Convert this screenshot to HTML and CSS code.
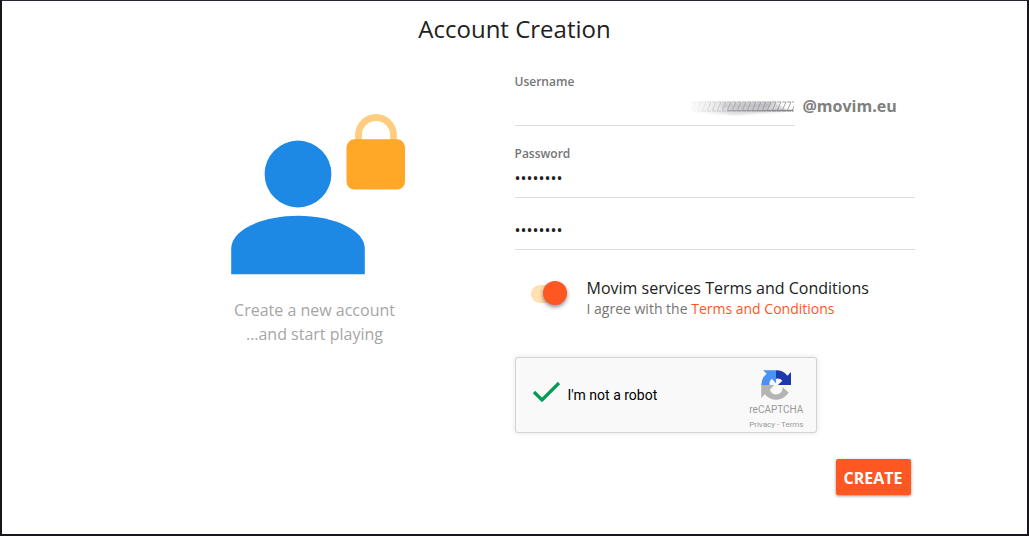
FILE: index.html
```html
<!DOCTYPE html>
<html lang="en">
<head>
<meta charset="utf-8">
<title>Account Creation</title>
<link rel="stylesheet" href="styles.css">
</head>
<body>
<main class="page">
  <h1 class="title">Account Creation</h1>
  <div class="columns">
    <section class="intro">
      <svg class="hero" viewBox="215 105 200 180" aria-hidden="true">
        <circle cx="298" cy="174" r="33.4" fill="#1e88e5"/>
        <path d="M231.200 274.200V248.500C231.200 230 262 215.700 298 215.700S364.800 230 364.800 248.500V274.200Z" fill="#1e88e5"/>
        <path d="M358.500 141V135a17.500 17.500 0 0 1 35 0V141" fill="none" stroke="#ffcc80" stroke-width="6.800"/>
        <rect x="346.500" y="139.300" width="58.500" height="50.200" rx="8" fill="#ffa726"/>
      </svg>
      <p class="tagline">Create a new account<br>…and start playing</p>
    </section>
    <form class="form">
      <div class="field">
        <label class="label" for="username">Username</label>
        <div class="user-row">
          <div class="user-box">
            <input class="input" id="username" type="text">
            <svg class="smudge" viewBox="0 0 108 18" aria-hidden="true">
              <defs>
                <linearGradient id="fade"><stop offset="0" stop-color="#fff" stop-opacity="0"/><stop offset=".4" stop-color="#fff" stop-opacity=".7"/><stop offset="1" stop-color="#fff"/></linearGradient>
                <mask id="m"><rect width="108" height="18" fill="url(#fade)"/></mask>
                <filter id="soft"><feGaussianBlur stdDeviation="1"/></filter>
                <pattern id="marks" width="5" height="18" patternUnits="userSpaceOnUse"><path d="M0 4h4l-4 9h4" fill="none" stroke="#77777d" stroke-width=".7"/></pattern>
              </defs>
              <g mask="url(#m)">
                <path d="M4 4H88L100 13L75 15L48 17L22 15L4 13Z" fill="#b4b4ba" opacity=".6" filter="url(#soft)"/>
                <path d="M34 5H86L80 11H34Z" fill="#9c9ca2" opacity=".55" filter="url(#soft)"/>
                <path d="M40 12.500H106" stroke="#85858b" stroke-width="1.500"/>
                <path d="M2 2H107V15H2Z" fill="url(#marks)"/>
              </g>
            </svg>
          </div>
          <span class="domain">@movim.eu</span>
        </div>
      </div>
      <div class="field">
        <label class="label" for="password">Password</label>
        <input class="input" id="password" type="password" value="password">
      </div>
      <div class="field repeat">
        <input class="input" type="password" value="password" aria-label="Repeat password">
      </div>
      <div class="terms">
        <input class="switch" id="agree" type="checkbox" checked>
        <div>
          <label class="terms-title" for="agree">Movim services Terms and Conditions</label>
          <p class="terms-text">I agree with the <a class="link" href="#">Terms and Conditions</a></p>
        </div>
      </div>
      <div class="captcha">
        <svg class="check" viewBox="0 0 30 24" aria-hidden="true"><path d="M2 12l8 8L27 3" fill="none" stroke="#009e55" stroke-width="3.200"/></svg>
        <span class="captcha-text">I'm not a robot</span>
        <div class="brand">
          <svg class="logo" viewBox="0 0 64 64" aria-hidden="true">
            <path fill="#1c3aa9" d="M64 32V4.500l-7.600 7.600A31 31 0 0 0 32 .5v18a13.500 13.500 0 0 1 13.600 4.400L36 32Z"/>
            <path fill="#4a90f5" d="M32 .5H4.500l7.600 7.600A31 31 0 0 0 .5 32h18a13.500 13.500 0 0 1 4.500-13.500L32 28Z"/>
            <path fill="#b4b4b4" d="M.5 32v27.500l7.600-7.600A31 31 0 0 0 59 48L45.500 36A13.500 13.500 0 0 1 19 41.500L28.500 32Z"/>
          </svg>
          <span class="brand-name">reCAPTCHA</span>
          <span class="legal"><a class="legal-link" href="#">Privacy</a> - <a class="legal-link" href="#">Terms</a></span>
        </div>
      </div>
      <div class="actions"><button class="create" type="button">CREATE</button></div>
    </form>
  </div>
</main>
</body>
</html>
```
FILE: styles.css
```css
* { box-sizing: border-box; }
body {
  margin: 0;
  background: #fff;
  color: #212121;
  font: 16px/24px "Open Sans", sans-serif;
}
p { margin: 0; }
.page {
  min-height: 100vh;
  border: 2px solid #18161b;
  border-top: 1px solid #2b2635;
}
.title {
  margin: 0;
  padding: 12px 0 8px;
  font-size: 24px;
  line-height: 32px;
  font-weight: 400;
  text-align: center;
}
.columns {
  display: grid;
  grid-template-columns: 1fr 1fr;
  max-width: 800px;
  margin: 0 auto;
}
.intro {
  padding-top: 52px;
  text-align: center;
}
.hero { display: block; width: 200px; margin: 0 auto; }
.tagline { padding-top: 13px; color: #a6a6a6; }
.form { padding-top: 21px; }
.field { display: flex; flex-direction: column; }
.label {
  font-size: 12px;
  line-height: 16px;
  font-weight: 600;
  color: #757575;
}
.input {
  width: 100%;
  height: 36px;
  padding: 0 0 4px;
  border: 0;
  border-bottom: 1px solid #dcdcdc;
  outline: 0;
  background: transparent;
  color: #212121;
  font: inherit;
}
.user-row { display: flex; gap: 8px; margin-bottom: 20px; }
.user-box { position: relative; width: 70%; }
.smudge {
  position: absolute;
  right: 0;
  top: 8px;
  width: 108px;
  height: 18px;
}
.domain { padding-top: 4px; font-weight: 700; color: #808080; }
.repeat { margin-top: 16px; }
.terms {
  display: flex;
  gap: 20px;
  padding: 26px 0 39px 16px;
}
.switch {
  appearance: none;
  position: relative;
  width: 36px;
  height: 18px;
  margin: 9px 0 0;
  border-radius: 9px;
  background: #ffe0b2;
}
.switch::after {
  content: "";
  position: absolute;
  right: 0;
  top: -4px;
  width: 24px;
  height: 24px;
  border-radius: 50%;
  background: #ff5722;
  box-shadow: 0 2px 4px rgba(0, 0, 0, .45);
}
.terms-title { display: block; }
.terms-text { font-size: 14px; line-height: 18px; color: #757575; }
.link { color: #ff5722; text-decoration: none; }
.captcha {
  display: flex;
  align-items: center;
  width: 302px;
  height: 76px;
  padding: 0 12px 0 16px;
  border: 1px solid #d3d3d3;
  border-radius: 3px;
  background: #f9f9f9;
  box-shadow: 0 0 4px 1px rgba(0, 0, 0, .08);
  font-family: Roboto, sans-serif;
}
.check { width: 30px; height: 24px; margin-top: -6px; }
.captcha-text { margin-left: 6px; font-size: 14px; color: #000; }
.brand {
  display: flex;
  flex-direction: column;
  align-items: center;
  margin-left: auto;
  padding-top: 8px;
  color: #999;
}
.logo { width: 30px; height: 30px; margin-top: 2px; }
.brand-name { font-size: 10px; line-height: 20px; }
.legal { font-size: 8px; line-height: 10px; }
.legal-link { color: inherit; text-decoration: none; }
.actions { display: flex; justify-content: flex-end; padding: 26px 4px 16px; }
.create {
  height: 36px;
  padding: 2px 8px 0;
  border: 0;
  border-radius: 2px;
  background: #ff5722;
  color: #fff;
  font: 700 16px/34px "Open Sans", sans-serif;
  box-shadow: 0 1px 3px rgba(0, 0, 0, .45);
}
```
